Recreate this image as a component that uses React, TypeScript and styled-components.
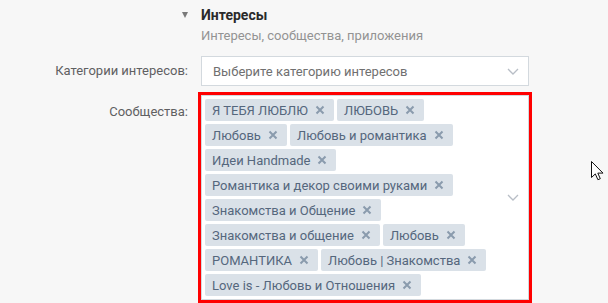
import React from "react";
import styled, {createGlobalStyle} from "styled-components";

const communities = [
  "Я ТЕБЯ ЛЮБЛЮ",
  "ЛЮБОВЬ",
  "Любовь",
  "Любовь и романтика",
  "Идеи Handmade",
  "Романтика и декор своими руками",
  "Знакомства и Общение",
  "Знакомства и общение",
  "Любовь",
  "РОМАНТИКА",
  "Любовь | Знакомства",
  "Love is - Любовь и Отношения",
];

const GlobalStyle = createGlobalStyle`
  html, body {
    margin: 0;
    padding: 0;
    background: #f7f7f7;
    overflow: hidden;
  }
  body {
    font-family: Roboto, "Open Sans", "Liberation Sans", sans-serif;
    font-size: 13px;
    -webkit-font-smoothing: antialiased;
  }
`;

const Chevron: React.FC = () => (
  <ChevronSvg width="12" height="7" viewBox="0 0 12 7">
    <path d="M1 1l5 5 5-5" fill="none" stroke="#b8bec6" strokeWidth="1.3" />
  </ChevronSvg>
);

const CloseIcon: React.FC = () => (
  <svg width="10" height="10" viewBox="0 0 10 10">
    <path d="M1.5 1.5l7 7M8.5 1.5l-7 7" stroke="#8a9bad" strokeWidth="2" />
  </svg>
);

const Cursor: React.FC = () => (
  <svg width="13" height="20" viewBox="0 0 13 20">
    <path
      d="M0.5 0.5v16l3.8-3.6 2.6 5.8 2.4-1-2.5-5.6h5.2z"
      fill="#fff"
      stroke="#111"
      strokeWidth="1"
      strokeLinejoin="round"
    />
  </svg>
);

export default function App() {
  return (
    <Page>
      <GlobalStyle />
      <SectionHeader>
        <Triangle />
        <HeaderTitle>Интересы</HeaderTitle>
      </SectionHeader>
      <Subtitle>Интересы, сообщества, приложения</Subtitle>

      <Row $top={11}>
        <Label>Категории интересов:</Label>
        <Select>
          <Placeholder>Выберите категорию интересов</Placeholder>
          <Chevron />
        </Select>
      </Row>

      <Row $top={9}>
        <Label $padTop={8}>Сообщества:</Label>
        <MultiSelect>
          <Tags>
            {communities.map((name, i) => (
              <Tag key={i}>
                {name}
                <CloseIcon />
              </Tag>
            ))}
          </Tags>
          <Chevron />
        </MultiSelect>
      </Row>

      <CursorSpot>
        <Cursor />
      </CursorSpot>
    </Page>
  );
}

const Page = styled.div`
  position: relative;
  width: 608px;
  height: 303px;
  padding-top: 6px;
  box-sizing: border-box;
`;

const SectionHeader = styled.div`
  display: flex;
  align-items: center;
  margin-left: 182px;
  gap: 13px;
  height: 17px;
`;

const Triangle = styled.span`
  width: 0;
  height: 0;
  border-left: 3.5px solid transparent;
  border-right: 3.5px solid transparent;
  border-top: 6px solid #7a7a7a;
`;

const HeaderTitle = styled.span`
  font-size: 14px;
  font-weight: 700;
  color: #2a2a2a;
`;

const Subtitle = styled.div`
  margin: 4px 0 0 201px;
  color: #939393;
  line-height: 18px;
`;

const Row = styled.div<{$top?: number}>`
  display: flex;
  align-items: flex-start;
  margin-top: ${p => p.$top ?? 12}px;
`;

const Label = styled.div<{$padTop?: number}>`
  width: 188px;
  margin-right: 13px;
  text-align: right;
  color: #5f6062;
  line-height: 18px;
  padding-top: ${p => p.$padTop ?? 6}px;
  flex-shrink: 0;
`;

const Select = styled.div`
  display: flex;
  align-items: center;
  justify-content: space-between;
  box-sizing: border-box;
  width: 328px;
  height: 30px;
  padding: 0 9px 0 11px;
  background: #fff;
  border: 1px solid #d3d9de;
`;

const Placeholder = styled.span`
  color: #707070;
`;

const ChevronSvg = styled.svg`
  flex-shrink: 0;
`;

const MultiSelect = styled.div`
  display: flex;
  align-items: center;
  box-sizing: border-box;
  width: 328px;
  padding: 3px 9px 3px 3px;
  background: #fff;
  border: 1px solid #d3d9de;
  outline: 3px solid #ff0000;
  outline-offset: 0;
`;

const Tags = styled.div`
  display: flex;
  flex-wrap: wrap;
  gap: 3px;
  width: 294px;
  flex-shrink: 0;
  margin-right: 8px;
`;

const Tag = styled.span`
  display: inline-flex;
  align-items: center;
  gap: 7px;
  height: 22px;
  padding: 0 9px 0 7px;
  border-radius: 2px;
  background: #dae1e8;
  color: #55677d;
  white-space: nowrap;
`;

const CursorSpot = styled.div`
  position: absolute;
  left: 591px;
  top: 161px;
  line-height: 0;
`;
